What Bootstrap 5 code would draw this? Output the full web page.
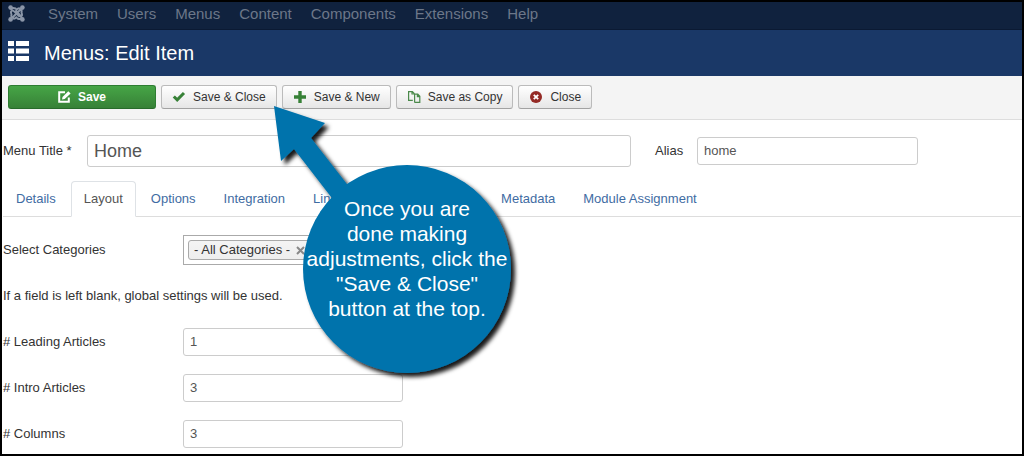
<!DOCTYPE html>
<html lang="en">
<head>
<meta charset="utf-8">
<meta name="viewport" content="width=device-width, initial-scale=1">
<title>Menus: Edit Item</title>
<link href="https://cdn.jsdelivr.net/npm/bootstrap@5.3.0/dist/css/bootstrap.min.css" rel="stylesheet">
<style>
  body { font-family: "Liberation Sans", Arial, sans-serif; font-size: 13px; line-height: 18px; color: #333; background: #fff; }
  .screen { border: 2px solid #000; min-height: 100vh; }
  .top-menu { background: #10223e; border-bottom: 1px solid #0b1a33; height: 28px; padding: 0 6px 4px; gap: 19px; }
  .top-menu .nav-link { color: #6c7789; font-size: 15px; line-height: 20px; padding: 0; }
  .brand-mark { margin-right: 4px; }
  .title-bar { background: #1a3867; color: #fff; height: 46px; padding: 0 6px; gap: 14px; }
  .title-bar h1 { font-size: 20px; line-height: 24px; }
  .tools { background: #f4f4f4; border-bottom: 1px solid #ddd; padding: 9px 6px 10px; gap: 5px; }
  .tools .btn { font-size: 12px; line-height: 16px; padding: 3px 10px; gap: 7px; border-radius: 3px; color: #333; border: 1px solid #bbb; border-bottom-color: #a2a2a2; background: linear-gradient(#fff, #e6e6e6); }
  .tools .btn-save { width: 148px; color: #fff; font-weight: bold; border-color: #2e7d32 #2e7d32 #286b2b; background: linear-gradient(#46a546, #378137); }
  .editor { padding: 0 1px; }
  .editor .form-control { font-size: 13px; line-height: 18px; padding: 4px 6px; border-color: #ccc; border-radius: 3px; color: #555; }
  .heading-row { padding-top: 15px; margin-bottom: 14px; }
  .heading-row .title-field { width: 544px; font-size: 18px; line-height: 22px; }
  .heading-row .title-label { width: 84px; }
  .heading-row .alias-label { width: 42px; margin-left: 24px; }
  .heading-row .alias-field { width: 221px; }
  .nav-tabs { --bs-nav-tabs-border-color: #ddd; --bs-nav-tabs-link-active-color: #555; gap: 2px; margin-bottom: 18px; }
  .nav-tabs .nav-link { color: #3f6ca3; padding: 8px 12px; border-radius: 4px 4px 0 0; }
  .field-row { margin-bottom: 18px; }
  .field-row > label, .field-row > .caption { width: 180px; }
  .field-row .form-control, .picker { width: 220px; }
  .picker { border: 1px solid #aaa; padding: 4px; }
  .chip { border: 1px solid #aaa; border-radius: 3px; background: linear-gradient(#f4f4f4, #eee); line-height: 18px; padding: 0 5px; gap: 6px; }
  .chip button { line-height: 0; }
  .blank-note { margin: 22px 0 23px; }
  .callout { left: 264px; top: 98px; width: 256px; height: 290px; pointer-events: none; }
  .callout p { left: 32px; right: 6px; top: 96px; color: #fff; font-size: 21px; line-height: 25px; }
</style>
</head>
<body>
<div class="screen position-relative">
  <nav class="top-menu d-flex align-items-center" aria-label="Main">
    <a href="#" class="brand-mark d-flex" aria-label="Joomla">
      <svg width="17" height="17" viewBox="0 0 17 17" fill="none" stroke="#8b96a8" stroke-width="2" stroke-linecap="round">
        <path d="M3.500 9.500C2.500 7 3 5.500 4.500 5.500c1 0 1.600.6 6.500 5.500M9.500 13.500c2.500 1 4 .5 4-1 0-1-.6-1.600-5.500-6.500M13.500 7.500c1 2.500.5 4-1 4M7.500 3.500C5 2.500 3.500 3 3.500 4.500M6 11l5.500-5.500C12.500 4.500 13 3.500 11 3.200c-1 0-1.600.6-2.500 1.500M11 6l-5.500 5.500c-1 1-.5 2.200.5 2.200s1.600-.6 2.500-1.500M3.500 9.500c-.4 1.500 0 2.600 1 3M13.500 7.500c.4-1.500 0-2.600-1-3"/>
        <g fill="#8b96a8" stroke="none"><circle cx="2.600" cy="2.600" r="2.300"/><circle cx="14.400" cy="2.600" r="2.300"/><circle cx="2.600" cy="14.400" r="2.300"/><circle cx="14.400" cy="14.400" r="2.300"/></g>
      </svg>
    </a>
    <a class="nav-link" href="#">System</a>
    <a class="nav-link" href="#">Users</a>
    <a class="nav-link" href="#">Menus</a>
    <a class="nav-link" href="#">Content</a>
    <a class="nav-link" href="#">Components</a>
    <a class="nav-link" href="#">Extensions</a>
    <a class="nav-link" href="#">Help</a>
  </nav>

  <header class="title-bar d-flex align-items-center">
    <svg width="22" height="24" viewBox="0 0 22 24" fill="#fff" aria-hidden="true"><path d="M0 0h6v5H0zM8 0h13v5H8zM0 7.500h6v5H0zM8 7.500h13v5H8zM0 15h6v5H0zM8 15h13v5H8z"/></svg>
    <h1 class="m-0 fw-normal">Menus: Edit Item</h1>
  </header>

  <div class="tools d-flex flex-wrap">
    <button type="button" class="btn btn-save d-flex align-items-center justify-content-center">
      <svg width="13" height="12" viewBox="0 0 13 12" aria-hidden="true"><path d="M7 1.200H1.200v9.600h9.600V6.500" fill="none" stroke="#fff" stroke-width="2"/><path d="M4 8.500l.5-2.500L10.300.2l2.300 2.200L6.700 8z" fill="#fff"/></svg>
      Save
    </button>
    <button type="button" class="btn d-flex align-items-center">
      <svg width="14" height="12" viewBox="0 0 14 12" aria-hidden="true"><path d="M1.800 5.500l3.400 3.400L12 2" fill="none" stroke="#378137" stroke-width="3"/></svg>
      Save &amp; Close
    </button>
    <button type="button" class="btn d-flex align-items-center">
      <svg width="14" height="12" viewBox="0 0 14 12" aria-hidden="true"><path d="M7 0v12M1 6h12" stroke="#378137" stroke-width="3.400"/></svg>
      Save &amp; New
    </button>
    <button type="button" class="btn d-flex align-items-center">
      <svg width="14" height="12" viewBox="0 0 14 12" fill="none" stroke="#4b8a4b" stroke-width="1.200" aria-hidden="true"><path d="M5.800 9.400H1.600V.6h3.800l2 2M5 .6V3h2.400M7.600 11.400V3.200h3.200l2 2v6.200H7.600M10.400 3.200v2.400h2.400"/></svg>
      Save as Copy
    </button>
    <button type="button" class="btn d-flex align-items-center">
      <svg width="14" height="12" viewBox="0 0 14 12" aria-hidden="true"><circle cx="7" cy="6" r="6" fill="#942a25"/><path d="M4.800 3.800l4.400 4.400M9.200 3.800L4.800 8.200" stroke="#fff" stroke-width="1.800"/></svg>
      Close
    </button>
  </div>

  <main class="editor">
    <div class="heading-row d-flex align-items-center">
      <label class="title-label flex-shrink-0" for="title">Menu Title *</label>
      <input class="form-control title-field" id="title" type="text" value="Home">
      <label class="alias-label flex-shrink-0" for="alias">Alias</label>
      <input class="form-control alias-field" id="alias" type="text" value="home">
    </div>

    <ul class="nav nav-tabs">
      <li class="nav-item"><a class="nav-link" href="#">Details</a></li>
      <li class="nav-item"><a class="nav-link active" aria-current="page" href="#">Layout</a></li>
      <li class="nav-item"><a class="nav-link" href="#">Options</a></li>
      <li class="nav-item"><a class="nav-link" href="#">Integration</a></li>
      <li class="nav-item"><a class="nav-link" href="#">Link Type</a></li>
      <li class="nav-item"><a class="nav-link" href="#">Page Display</a></li>
      <li class="nav-item"><a class="nav-link" href="#">Metadata</a></li>
      <li class="nav-item"><a class="nav-link" href="#">Module Assignment</a></li>
    </ul>

    <div class="field-row d-flex align-items-center">
      <span class="caption">Select Categories</span>
      <div class="picker d-flex">
        <span class="chip d-flex align-items-center">- All Categories -
          <button type="button" class="border-0 bg-transparent p-0" aria-label="Remove">
            <svg width="9" height="9" viewBox="0 0 9 9"><path d="M1 1l7 7M8 1L1 8" stroke="#888" stroke-width="2"/></svg>
          </button>
        </span>
      </div>
    </div>

    <p class="blank-note">If a field is left blank, global settings will be used.</p>

    <div class="field-row d-flex align-items-center">
      <label for="leading"># Leading Articles</label>
      <input class="form-control" id="leading" type="text" value="1">
    </div>
    <div class="field-row d-flex align-items-center">
      <label for="intro"># Intro Articles</label>
      <input class="form-control" id="intro" type="text" value="3">
    </div>
    <div class="field-row d-flex align-items-center mb-0">
      <label for="columns"># Columns</label>
      <input class="form-control" id="columns" type="text" value="3">
    </div>
  </main>

  <!-- Help bubble pointing at the Save & Close button -->
  <aside class="callout position-absolute">
    <svg class="d-block" width="256" height="290" viewBox="266 100 256 290" aria-hidden="true">
      <defs><filter id="shade" x="-10%" y="-10%" width="125%" height="125%"><feDropShadow dx="4" dy="4" stdDeviation="2" flood-color="#000" flood-opacity=".9"/></filter></defs>
      <g fill="#0373ac" filter="url(#shade)">
        <path d="M274 106L325 123 311 138 350 188 335 202 294 149 281 161z"/>
        <circle cx="407" cy="269" r="104"/>
      </g>
    </svg>
    <p class="position-absolute m-0 text-center text-nowrap">Once you are<br>done making<br>adjustments, click the<br>"Save &amp; Close"<br>button at the top.</p>
  </aside>
</div>
<script src="https://cdn.jsdelivr.net/npm/bootstrap@5.3.0/dist/js/bootstrap.bundle.min.js"></script>
</body>
</html>
